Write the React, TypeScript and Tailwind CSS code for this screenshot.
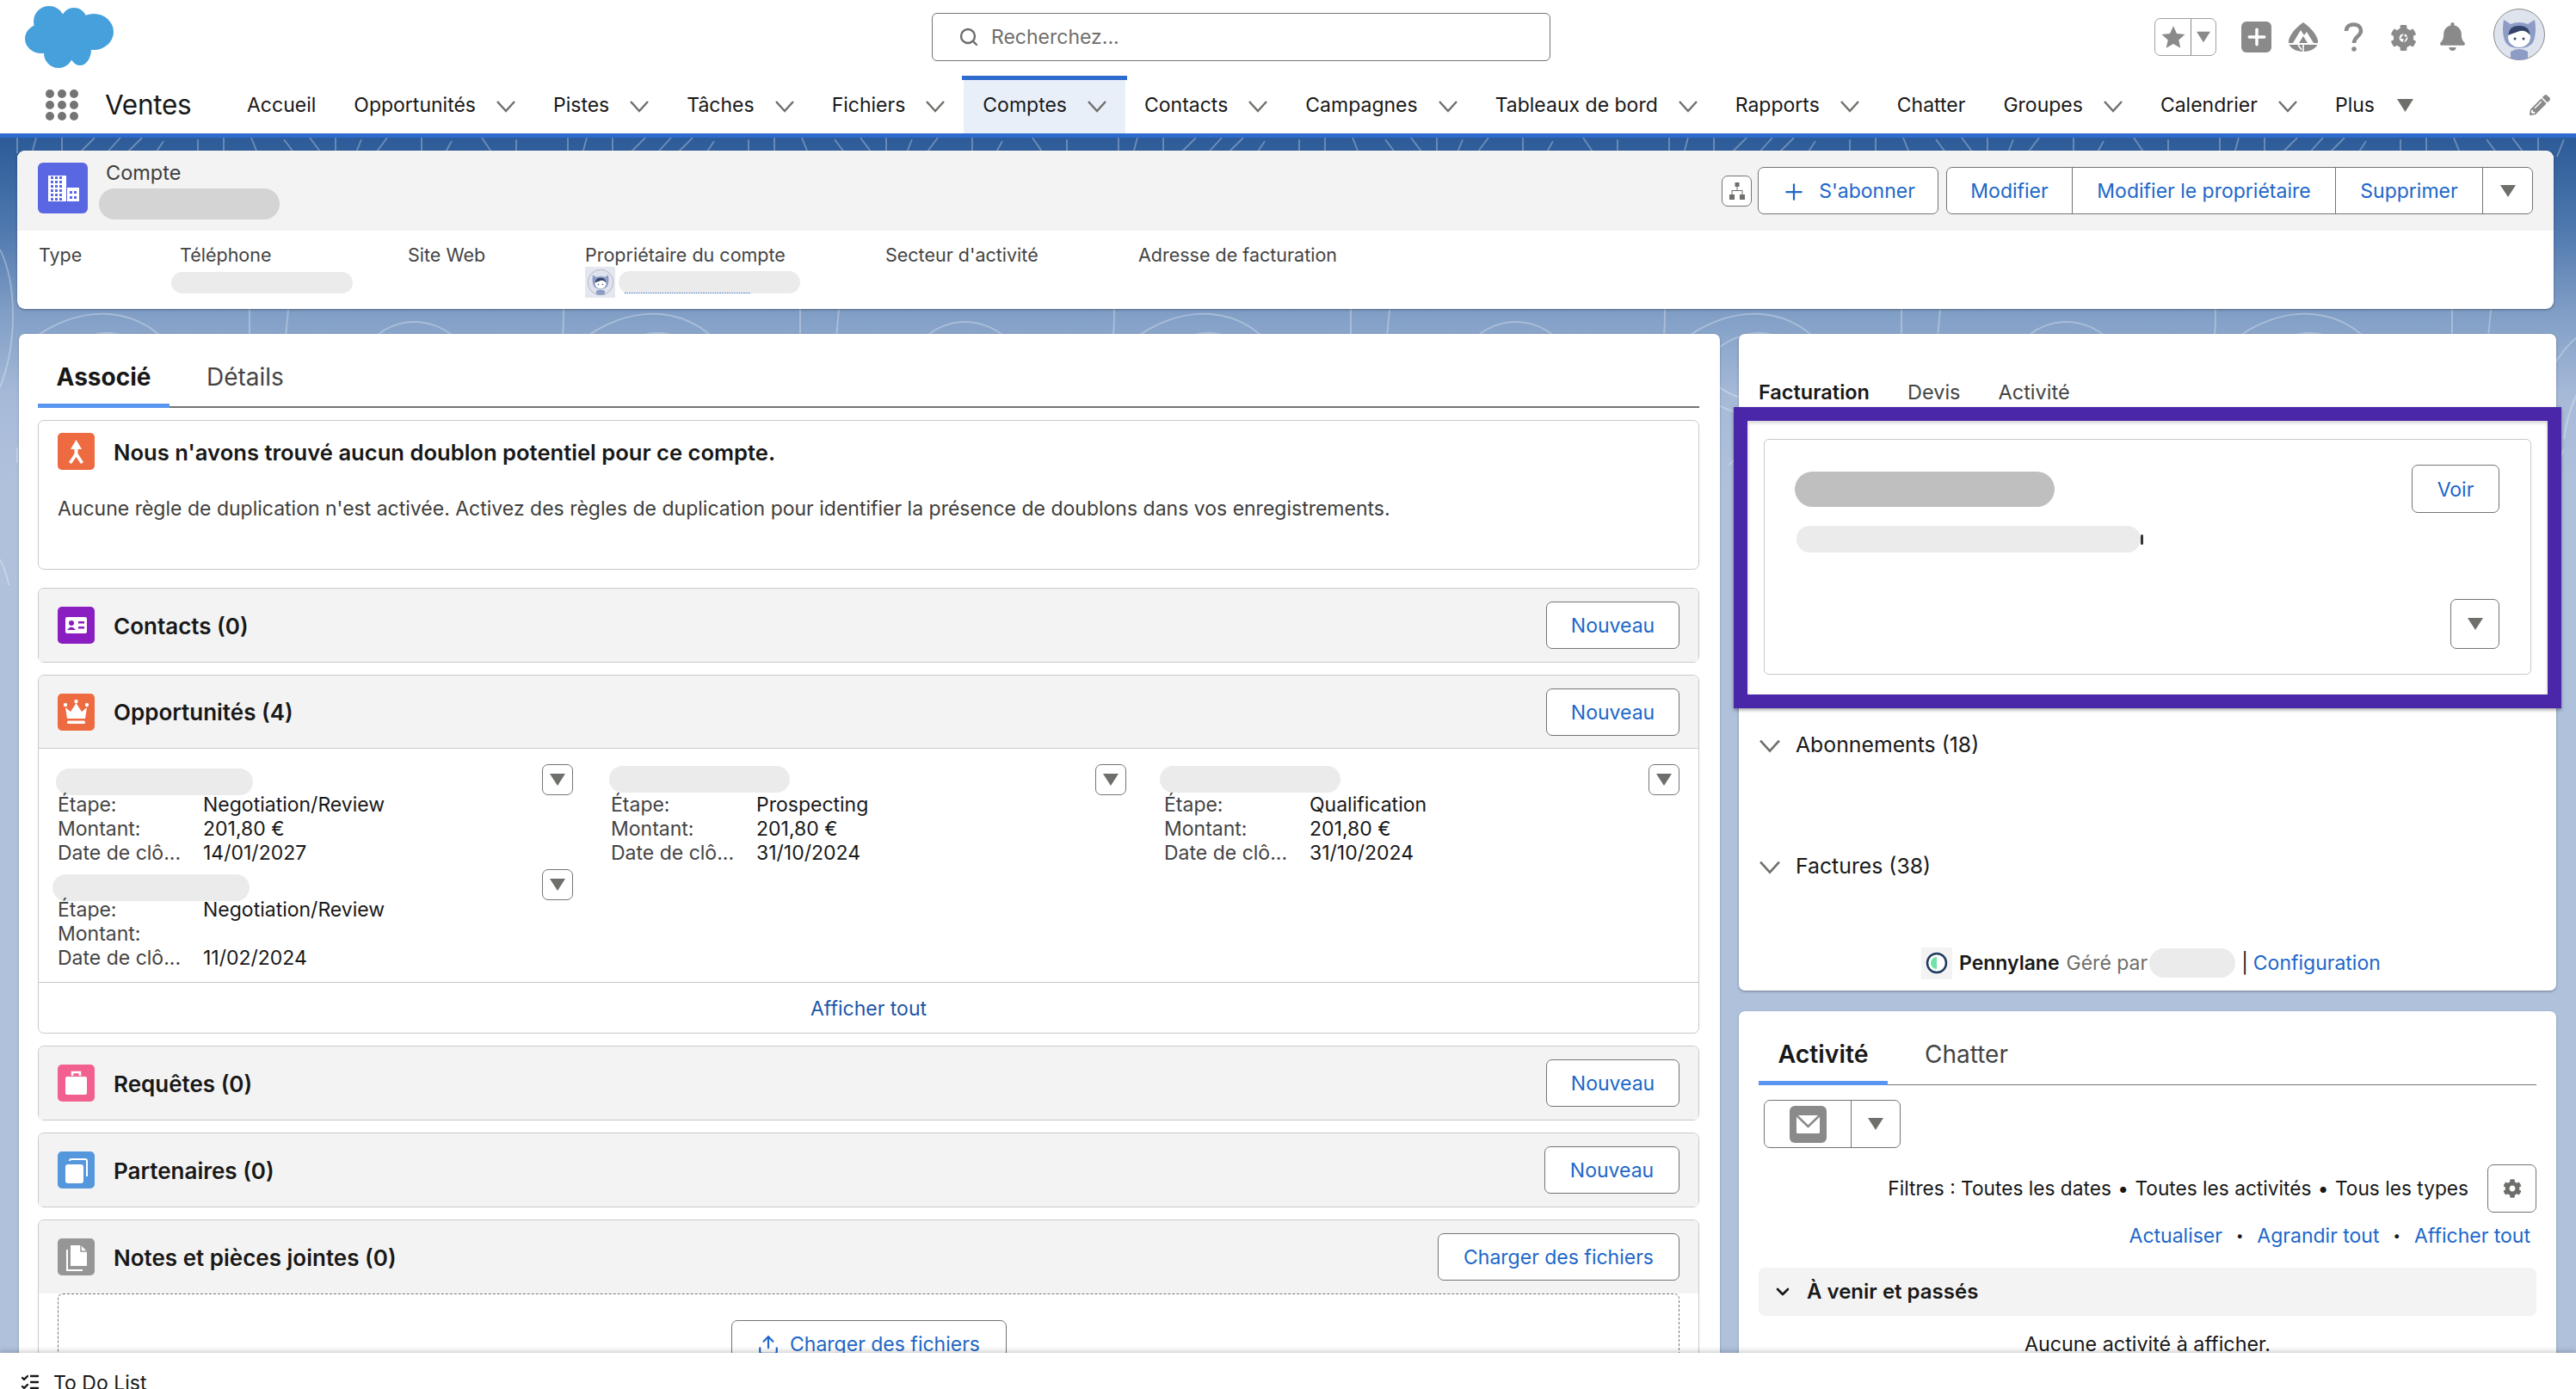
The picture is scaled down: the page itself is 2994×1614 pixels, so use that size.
import React from "react";
import { ChevronDown, Plus, Upload, ListChecks, Search } from "lucide-react";
import { FaBell, FaCog, FaPencilAlt } from "react-icons/fa";

const Caret = ({ className = "w-[18px] h-[14px]", color = "#706e6b" }: { className?: string; color?: string }) => (
  <svg viewBox="0 0 18 14" className={className}>
    <path d="M0 0H18L9 14Z" fill={color} />
  </svg>
);

const Chevron = ({ className = "w-[22px] h-[22px] text-[#706e6b]" }: { className?: string }) => (
  <svg viewBox="0 0 22 22" className={className} fill="none" stroke="currentColor" strokeWidth="2.4">
    <path d="M1 6L11 17L21 6" />
  </svg>
);

const Cloud = () => (
  <svg width="103" height="72" viewBox="0 0 103 72" fill="#45a0dc">
    <circle cx="28" cy="18" r="18" />
    <circle cx="57" cy="17" r="15" />
    <ellipse cx="80" cy="30" rx="23" ry="21" />
    <ellipse cx="19" cy="38" rx="19" ry="17" />
    <ellipse cx="39" cy="55" rx="17" ry="17" />
    <ellipse cx="64" cy="50" rx="13" ry="19" />
    <rect x="20" y="15" width="55" height="35" />
  </svg>
);

const Dots = () => (
  <svg width="38" height="36" viewBox="0 0 38 36" fill="#747474">
    {[5, 19, 33].map((x) => [5, 18, 31].map((y) => <circle key={`${x}-${y}`} cx={x} cy={y} r="5" />))}
  </svg>
);

const Avatar = ({ size = 60 }: { size?: number }) => (
  <svg width={size} height={size} viewBox="0 0 60 60">
    <circle cx="30" cy="30" r="29.5" fill="#dfe3ee" stroke="#8a8a8a" strokeWidth="1" />
    <path d="M12 13L20 18Q30 14 40 18L48 13Q50 25 48 33Q46 46 30 46Q14 46 12 33Q10 25 12 13Z" fill="#8c9cc4" />
    <ellipse cx="30" cy="33" rx="13" ry="12" fill="#fff" />
    <path d="M17 31Q19 19 30 20Q41 19 43 31Q36 23 28 27Q22 29 17 31Z" fill="#34436b" />
    <circle cx="25" cy="35" r="1.5" fill="#34436b" />
    <circle cx="35" cy="35" r="1.5" fill="#34436b" />
    <path d="M20 50Q30 44 40 50L40 58Q30 61 20 58Z" fill="#8c9cc4" />
  </svg>
);

const Tile = ({ color, children }: { color: string; children: React.ReactNode }) => (
  <svg width="43" height="43" viewBox="0 0 43 43" className="shrink-0">
    <rect width="43" height="43" rx="5" fill={color} />
    {children}
  </svg>
);

const DupIcon = () => (
  <Tile color="#ee6a40">
    <path d="M21.5 8L28 19H23.5V24L30 34L27 36L21.5 28L16 36L13 34L19.5 24V19H15Z" fill="#fff" />
  </Tile>
);
const ContactIcon = () => (
  <Tile color="#8a1ec0">
    <rect x="9" y="12" width="25" height="19" rx="2" fill="#fff" />
    <circle cx="16" cy="19" r="3" fill="#8a1ec0" />
    <path d="M11 27Q16 20 21 27Z" fill="#8a1ec0" />
    <rect x="24" y="17" width="7" height="2.5" fill="#8a1ec0" />
    <rect x="24" y="23" width="7" height="2.5" fill="#8a1ec0" />
  </Tile>
);
const CrownIcon = () => (
  <Tile color="#ee6a40">
    <path d="M9 16L15 21L21.5 11L28 21L34 16L32 29H11Z" fill="#fff" />
    <circle cx="9" cy="13" r="2.2" fill="#fff" />
    <circle cx="21.5" cy="9" r="2.2" fill="#fff" />
    <circle cx="34" cy="13" r="2.2" fill="#fff" />
    <rect x="11" y="31.5" width="21" height="3.5" rx="1.5" fill="#fff" />
  </Tile>
);
const CaseIcon = () => (
  <Tile color="#f2608f">
    <rect x="9" y="14" width="25" height="21" rx="2" fill="#fff" />
    <path d="M17 13V9H26V13" fill="none" stroke="#fff" strokeWidth="2.5" />
  </Tile>
);
const PartnerIcon = () => (
  <Tile color="#5597dc">
    <path d="M14 11Q14 9 16 9H32Q34 9 34 11V29" fill="none" stroke="#fff" strokeWidth="2" />
    <rect x="9" y="15" width="21" height="22" rx="3" fill="#fff" />
  </Tile>
);
const FileIcon = () => (
  <Tile color="#969696">
    <path d="M15 8H27L34 15V32H15Z" fill="#fff" />
    <path d="M27 8V15H34" fill="none" stroke="#969696" strokeWidth="1.5" />
    <path d="M11 13V37H29" fill="none" stroke="#fff" strokeWidth="2" />
  </Tile>
);

const Redact = ({ className }: { className: string }) => <div className={`rounded-full ${className}`} />;

const Btn = ({ children, className = "" }: { children: React.ReactNode; className?: string }) => (
  <button className={`flex items-center justify-center bg-white border border-[#747474] rounded-[7px] text-[#2067c9] text-[23px] pt-[2px] shrink-0 ${className}`}>
    {children}
  </button>
);

const CaretBtn = ({ className = "" }: { className?: string }) => (
  <button className={`flex items-center justify-center bg-white border border-[#747474] rounded-[7px] shrink-0 ${className}`}>
    <Caret />
  </button>
);

const navItems: { label: string; chevron?: boolean; active?: boolean }[] = [
  { label: "Accueil" },
  { label: "Opportunités", chevron: true },
  { label: "Pistes", chevron: true },
  { label: "Tâches", chevron: true },
  { label: "Fichiers", chevron: true },
  { label: "Comptes", chevron: true, active: true },
  { label: "Contacts", chevron: true },
  { label: "Campagnes", chevron: true },
  { label: "Tableaux de bord", chevron: true },
  { label: "Rapports", chevron: true },
  { label: "Chatter" },
  { label: "Groupes", chevron: true },
  { label: "Calendrier", chevron: true },
];

const Header = () => (
  <header className="h-[155px] shrink-0 bg-white flex flex-col">
    <div className="h-[88px] shrink-0 flex items-start">
      <div className="ml-[29px] mt-[7px] w-[1054px] shrink-0">
        <Cloud />
      </div>
      <div className="mt-[15px] w-[719px] h-[56px] shrink-0 border border-[#747474] rounded-[6px] flex items-center pl-[30px] gap-[14px]">
        <Search className="w-[24px] h-[24px] text-[#706e6b]" strokeWidth={2.4} />
        <span className="text-[23px] pt-[1px] text-[#706e6b]">Recherchez...</span>
      </div>
      <div className="ml-[702px] mt-[21px] w-[72px] h-[44px] shrink-0 border border-[#a0a0a0] rounded-[7px] flex">
        <div className="w-[42px] border-r border-[#8a8a8a] flex items-center justify-center">
          <svg width="28" height="28" viewBox="0 0 24 24" fill="#8a8a8a">
            <path d="M12 1L15.4 8.6L23.5 9.4L17.4 14.9L19.1 23L12 18.8L4.9 23L6.6 14.9L0.5 9.4L8.6 8.6Z" />
          </svg>
        </div>
        <div className="flex-1 flex items-center justify-center">
          <Caret className="w-[16px] h-[14px]" color="#8a8a8a" />
        </div>
      </div>
      <div className="ml-[29px] mt-[25px] w-[35px] h-[36px] shrink-0 bg-[#8a8a8a] rounded-[6px] flex items-center justify-center">
        <Plus className="w-[30px] h-[30px] text-white" strokeWidth={2.8} />
      </div>
      <div className="ml-[19px] mt-[26px] shrink-0">
        <svg width="36" height="34" viewBox="0 0 36 34">
          <path d="M18 0C28 7 36 17 35 24C34 30 26 34 18 34C10 34 2 30 1 24C0 17 8 7 18 0Z" fill="#8a8a8a" />
          <path d="M6 24L15 9L19 15L22 11L30 24Z" fill="#fff" />
          <path d="M13 24L18 16L23 24Z" fill="#8a8a8a" />
          <path d="M1 25H35" stroke="#fff" strokeWidth="2" />
          <path d="M18 26V34M12 26L16 32" stroke="#fff" strokeWidth="1.6" />
        </svg>
      </div>
      <div className="ml-[29px] mt-[26px] shrink-0">
        <svg width="23" height="34" viewBox="0 0 23 34" fill="none" stroke="#8a8a8a" strokeWidth="4.5">
          <path d="M3 10C3 5 7 2.5 11.5 2.5C17 2.5 20 6 20 10C20 16 12 16.5 12 24" />
          <circle cx="12" cy="31" r="2.8" fill="#8a8a8a" stroke="none" />
        </svg>
      </div>
      <div className="ml-[31px] mt-[28px] shrink-0 relative">
        <FaCog className="w-[31px] h-[32px] text-[#8a8a8a]" />
        <svg width="10" height="14" viewBox="0 0 10 14" className="absolute left-[11px] top-[9px]" fill="#8a8a8a">
          <path d="M6 0L1 8H4.5L3.5 14L9 5.5H5.5Z" />
        </svg>
      </div>
      <div className="ml-[24px] mt-[26px] shrink-0">
        <FaBell className="w-[35px] h-[33px] text-[#8a8a8a]" />
      </div>
      <div className="ml-[30px] mt-[10px] shrink-0">
        <Avatar />
      </div>
    </div>
    <nav className="flex-1 flex items-stretch">
      <div className="ml-[53px] w-[69px] shrink-0 flex items-center">
        <Dots />
      </div>
      <div className="w-[143px] shrink-0 flex items-center text-[31.5px] tracking-[-0.3px] text-[#181818]">Ventes</div>
      {navItems.map((n) => (
        <div
          key={n.label}
          className={`flex items-center pl-[22px] pr-[22px] pt-[2px] gap-[24px] text-[23px] text-[#181818] shrink-0 ${
            n.active ? "bg-[#e8eff9] relative" : ""
          }`}
        >
          {n.active && <div className="absolute -left-[2px] -right-[2px] top-0 h-[5px] bg-[#2e6bce]" />}
          <span>{n.label}</span>
          {n.chevron && <Chevron />}
        </div>
      ))}
      <div className="flex items-center pl-[22px] pt-[2px] gap-[26px] text-[23px] text-[#181818] shrink-0">
        <span>Plus</span>
        <Caret className="w-[19px] h-[15px]" />
      </div>
      <div className="flex-1 flex items-center justify-end pr-[30px]">
        <FaPencilAlt className="w-[24px] h-[24px] text-[#8a8a8a]" />
      </div>
    </nav>
  </header>
);

const Field = ({ label, className, children }: { label: string; className: string; children?: React.ReactNode }) => (
  <div className={`shrink-0 flex flex-col ${className}`}>
    <span className="text-[21.5px] leading-[28px] text-[#444444] whitespace-nowrap">{label}</span>
    {children}
  </div>
);

const Highlights = () => (
  <section className="relative ml-[20px] mr-[26px] mt-[15px] h-[184px] bg-white rounded-[9px] shadow-[0_1px_3px_rgba(0,0,0,0.35)] overflow-hidden shrink-0">
    <div className="h-[93px] bg-[#f3f3f3] flex items-start pl-[24px]">
      <svg width="58" height="59" viewBox="0 0 58 59" className="mt-[14px] shrink-0">
        <rect width="58" height="59" rx="6" fill="#5a67e3" />
        <rect x="12" y="15" width="21" height="30" fill="#fff" />
        <rect x="34" y="29" width="14" height="16" fill="#fff" />
        {[16, 21, 26, 31, 36, 41].map((y) =>
          [15, 20, 25].map((x) => <rect key={`${x}-${y}`} x={x} y={y} width="3" height="3" fill="#5a67e3" />)
        )}
        {[33, 39].map((y) =>
          [37, 42].map((x) => <rect key={`${x}-${y}`} x={x} y={y} width="3" height="3" fill="#5a67e3" />)
        )}
      </svg>
      <div className="ml-[13px] mt-[12px] flex flex-col">
        <span className="ml-[8px] text-[23.5px] leading-[28px] text-[#3e3e3c]">Compte</span>
        <Redact className="w-[210px] h-[36px] bg-[#d4d4d4] mt-[4px]" />
      </div>
      <div className="ml-auto mt-[19px] flex items-start">
        <button className="mt-[10px] w-[35px] h-[36px] bg-white border border-[#747474] rounded-[7px] flex items-center justify-center">
          <svg width="18" height="20" viewBox="0 0 18 20" fill="#706e6b">
            <rect x="6.5" y="0" width="5" height="5" />
            <rect x="0" y="14" width="6" height="6" />
            <rect x="12" y="14" width="6" height="6" />
            <path d="M8.5 5V9H2.5V14H3.5V10H14.5V14H15.5V9H9.5V5Z" />
          </svg>
        </button>
        <Btn className="ml-[7px] w-[210px] h-[55px] gap-[14px]">
          <Plus className="w-[30px] h-[30px]" strokeWidth={1.8} />
          <span>S'abonner</span>
        </Btn>
        <div className="ml-[9px] mr-[24px] h-[55px] flex bg-white border border-[#747474] rounded-[7px] text-[#2067c9] text-[23px]">
          <div className="w-[146px] pt-[2px] flex items-center justify-center border-r border-[#747474]">Modifier</div>
          <div className="w-[306px] pt-[2px] flex items-center justify-center border-r border-[#747474]">Modifier le propriétaire</div>
          <div className="w-[171px] pt-[2px] flex items-center justify-center border-r border-[#747474]">Supprimer</div>
          <div className="w-[57px] flex items-center justify-center">
            <Caret />
          </div>
        </div>
      </div>
    </div>
    <div className="flex pl-[25px] pt-[14px]">
      <Field label="Type" className="w-[164px]" />
      <Field label="Téléphone" className="w-[265px]">
        <Redact className="w-[211px] h-[25px] bg-[#ebebeb] -ml-[10px] mt-[6px]" />
      </Field>
      <Field label="Site Web" className="w-[206px]" />
      <Field label="Propriétaire du compte" className="w-[349px]">
        <div className="flex items-start">
          <div className="w-[35px] h-[36px] bg-[#e4e7f0] flex items-center justify-center">
            <Avatar size={30} />
          </div>
          <div className="relative ml-[4px] mt-[5px] w-[211px] h-[26px] bg-[#ebebeb] rounded-full">
            <div className="absolute left-[7px] bottom-0 w-[146px] border-b border-dotted border-[#2e6bce]" />
          </div>
        </div>
      </Field>
      <Field label="Secteur d'activité" className="w-[294px]" />
      <Field label="Adresse de facturation" className="w-[300px]" />
    </div>
  </section>
);

const CardShell = ({
  title,
  icon,
  button,
  btnClass,
  children,
}: {
  title: string;
  icon: React.ReactNode;
  button?: string;
  btnClass?: string;
  children?: React.ReactNode;
}) => (
  <div className="border border-[#c9c9c9] rounded-[7px] shrink-0 bg-white">
    <div className="h-[85px] bg-[#f3f3f3] rounded-t-[7px] flex items-center pl-[22px] pr-[22px]">
      {icon}
      <span className="ml-[22px] pt-[1px] text-[26px] font-semibold text-[#181818]">{title}</span>
      {button && <Btn className={`ml-auto h-[55px] ${btnClass}`}>{button}</Btn>}
    </div>
    {children}
  </div>
);

const Row = ({ k, v }: { k: string; v?: string }) => (
  <div className="flex h-[28px] pt-[2px] items-center text-[23px]">
    <span className="w-[169px] shrink-0 text-[#444444]">{k}</span>
    <span className="text-[#181818]">{v}</span>
  </div>
);

const Opp = ({
  stage,
  amount,
  date,
  pillClass = "w-[210px] -ml-[2px] mt-[2px]",
}: {
  stage: string;
  amount?: string;
  date: string;
  pillClass?: string;
}) => (
  <div className="w-[599px]">
    <div className="h-[32px] flex items-start justify-between">
      <Redact className={`h-[31px] bg-[#ebebeb] ${pillClass}`} />
      <CaretBtn className="w-[36px] h-[36px] relative" />
    </div>
    <Row k="Étape:" v={stage} />
    <Row k="Montant:" v={amount} />
    <Row k="Date de clô..." v={date} />
  </div>
);

const LeftCard = () => (
  <section className="w-[1977px] shrink-0 bg-white rounded-t-[7px] pl-[22px] pr-[24px] h-[1300px] shadow-[0_1px_3px_rgba(0,0,0,0.25)]">
    <div className="h-[86px] flex items-end border-b-2 border-[#747474]">
      <div className="relative w-[153px] h-[69px] flex items-center justify-center">
        <span className="text-[28px] font-bold text-[#181818]">Associé</span>
        <div className="absolute left-0 right-0 -bottom-[2px] h-[5px] bg-[#5a95f0]" />
      </div>
      <div className="h-[69px] ml-[43px] flex items-center text-[28px] text-[#444444]">Détails</div>
    </div>
    <div className="mt-[14px] h-[174px] border border-[#c9c9c9] rounded-[7px] px-[22px] pt-[14px]">
      <div className="flex items-start">
        <DupIcon />
        <span className="ml-[22px] mt-[4px] text-[25.6px] font-semibold text-[#181818]">
          Nous n'avons trouvé aucun doublon potentiel pour ce compte.
        </span>
      </div>
      <p className="mt-[30px] text-[23px] leading-[30px] text-[#3e3e3c]">
        Aucune règle de duplication n'est activée. Activez des règles de duplication pour identifier la présence de doublons dans vos enregistrements.
      </p>
    </div>
    <div className="flex flex-col gap-[14px] mt-[21px]">
      <CardShell title="Contacts (0)" icon={<ContactIcon />} button="Nouveau" btnClass="w-[155px]" />
      <div className="border border-[#c9c9c9] rounded-[7px] shrink-0 bg-white">
        <div className="h-[85px] bg-[#f3f3f3] rounded-t-[7px] flex items-center px-[22px] border-b border-[#c9c9c9]">
          <CrownIcon />
          <span className="ml-[22px] pt-[1px] text-[26px] font-semibold text-[#181818]">Opportunités (4)</span>
          <Btn className="ml-auto w-[155px] h-[55px]">Nouveau</Btn>
        </div>
        <div className="h-[272px] pl-[22px] pt-[18px] flex gap-[44px] border-b border-[#c9c9c9]">
          <div className="flex flex-col gap-[6px]">
            <Opp stage="Negotiation/Review" amount="201,80 €" date="14/01/2027" pillClass="w-[229px] -ml-[2px] mt-[5px]" />
            <Opp stage="Negotiation/Review" date="11/02/2024" pillClass="w-[229px] -ml-[6px] mt-[6px]" />
          </div>
          <Opp stage="Prospecting" amount="201,80 €" date="31/10/2024" />
          <Opp stage="Qualification" amount="201,80 €" date="31/10/2024" pillClass="w-[210px] -ml-[5px] mt-[2px]" />
        </div>
        <div className="h-[58px] pt-[2px] flex items-center justify-center text-[23px] text-[#1e56a8]">Afficher tout</div>
      </div>
      <CardShell title="Requêtes (0)" icon={<CaseIcon />} button="Nouveau" btnClass="w-[155px]" />
      <CardShell title="Partenaires (0)" icon={<PartnerIcon />} button="Nouveau" btnClass="w-[157px]" />
      <CardShell title="Notes et pièces jointes (0)" icon={<FileIcon />} button="Charger des fichiers" btnClass="w-[281px]">
        <div className="mx-[22px] h-[200px] border border-dashed border-[#747474] rounded-[6px] pt-[30px] flex justify-center">
          <Btn className="w-[320px] h-[55px] gap-[12px]">
            <Upload className="w-[26px] h-[26px]" strokeWidth={2} />
            <span>Charger des fichiers</span>
          </Btn>
        </div>
      </CardShell>
    </div>
  </section>
);

const BillingCard = () => (
  <section className="h-[763px] bg-white rounded-[7px] shadow-[0_1px_3px_rgba(0,0,0,0.35)] flex flex-col shrink-0">
    <div className="h-[85px] shrink-0 flex items-end pl-[23px] gap-[44px] pb-[3px] text-[23.5px]">
      <span className="font-semibold text-[#181818] h-[32px]">Facturation</span>
      <span className="text-[#444444] h-[32px]">Devis</span>
      <span className="text-[#444444] h-[32px]">Activité</span>
    </div>
    <div className="relative h-[350px] shrink-0 px-[29px] pt-[37px]">
      <div className="h-[274px] border border-[#c9c9c9] rounded-[6px] flex justify-between pl-[35px] pr-[36px] pt-[29px]">
        <div className="flex flex-col">
          <Redact className="w-[302px] h-[41px] bg-[#bfbfbf] mt-[8px]" />
          <div className="flex items-center mt-[22px] ml-[2px]">
            <Redact className="w-[400px] h-[31px] bg-[#ebebeb]" />
            <div className="w-[3px] h-[12px] bg-[#333333] rounded-full" />
          </div>
        </div>
        <div className="flex flex-col items-end">
          <Btn className="w-[102px] h-[56px]">Voir</Btn>
          <CaretBtn className="w-[57px] h-[58px] mt-[100px]" />
        </div>
      </div>
      <div className="absolute -left-[6px] -right-[6px] top-0 bottom-0 border-[16px] border-[#4a27a8] pointer-events-none shadow-[0_2px_4px_rgba(0,0,0,0.35),inset_0_2px_4px_rgba(0,0,0,0.2)]" />
    </div>
    <div className="flex flex-col pl-[24px] text-[24.8px] text-[#181818] mt-[25px] gap-[105px]">
      <div className="flex items-center h-[36px] gap-[18px]">
        <Chevron className="w-[24px] h-[24px] text-[#706e6b]" />
        <span>Abonnements (18)</span>
      </div>
      <div className="flex items-center h-[36px] gap-[18px]">
        <Chevron className="w-[24px] h-[24px] text-[#706e6b]" />
        <span>Factures (38)</span>
      </div>
    </div>
    <div className="flex items-center mt-[75px] ml-[212px] text-[23px] h-[38px]">
      <div className="w-[36px] h-[37px] bg-[#f3f3f3] flex items-center justify-center shrink-0">
        <svg width="26" height="26" viewBox="0 0 26 26">
          <circle cx="13" cy="13" r="11" fill="#fff" stroke="#1e3a5f" strokeWidth="2.5" />
          <path d="M13 6A7 7 0 0 0 13 20Z" fill="#6fe3a8" />
        </svg>
      </div>
      <span className="ml-[8px] font-semibold text-[#181818]">Pennylane</span>
      <span className="ml-[8px] text-[#706e6b]">Géré par</span>
      <Redact className="ml-[2px] w-[100px] h-[34px] bg-[#ebebeb]" />
      <span className="ml-[7px] text-[#181818]">|</span>
      <span className="ml-[6px] text-[#2067c9]">Configuration</span>
    </div>
  </section>
);

const ActivityCard = () => (
  <section className="mt-[24px] bg-white rounded-t-[7px] px-[23px] h-[500px] shrink-0 shadow-[0_1px_3px_rgba(0,0,0,0.25)]">
    <div className="h-[86px] flex items-end border-b border-[#747474]">
      <div className="relative w-[150px] h-[70px] flex items-center justify-center">
        <span className="text-[28.5px] font-semibold text-[#181818]">Activité</span>
        <div className="absolute left-0 right-0 -bottom-[1px] h-[5px] bg-[#5a95f0]" />
      </div>
      <div className="h-[70px] ml-[43px] flex items-center text-[28px] text-[#444444]">Chatter</div>
    </div>
    <div className="mt-[17px] ml-[6px] w-[159px] h-[56px] border border-[#747474] rounded-[7px] flex">
      <div className="w-[101px] border-r border-[#747474] flex items-center justify-center">
        <svg width="43" height="43" viewBox="0 0 43 43">
          <rect width="43" height="43" rx="6" fill="#8a8a8a" />
          <rect x="8" y="11" width="27" height="21" rx="1.5" fill="#fff" />
          <path d="M8 11L21.5 24L35 11" fill="none" stroke="#8a8a8a" strokeWidth="2.5" />
        </svg>
      </div>
      <div className="flex-1 flex items-center justify-center">
        <Caret />
      </div>
    </div>
    <div className="mt-[19px] flex items-center justify-end h-[56px]">
      <span className="text-[22.7px] text-[#181818] whitespace-nowrap">
        Filtres : Toutes les dates <span className="mx-[1px]">•</span> Toutes les activités <span className="mx-[1px]">•</span> Tous les types
      </span>
      <button className="ml-[22px] w-[57px] h-[56px] border border-[#747474] rounded-[7px] flex items-center justify-center shrink-0">
        <FaCog className="w-[22px] h-[22px] text-[#706e6b]" />
      </button>
    </div>
    <div className="mt-[12px] flex justify-end items-center gap-[16px] pr-[7px] text-[23px] text-[#2067c9] h-[30px]">
      <span>Actualiser</span>
      <span className="text-[#181818] text-[15px]">•</span>
      <span>Agrandir tout</span>
      <span className="text-[#181818] text-[15px]">•</span>
      <span>Afficher tout</span>
    </div>
    <div className="mt-[22px] h-[56px] bg-[#f3f3f3] rounded-[7px] flex items-center pl-[16px]">
      <ChevronDown className="w-[24px] h-[24px] text-[#181818]" strokeWidth={2.6} />
      <span className="ml-[16px] text-[24px] font-semibold text-[#181818]">À venir et passés</span>
    </div>
    <div className="mt-[16px] text-center text-[23.3px] text-[#181818]">Aucune activité à afficher.</div>
  </section>
);

const Contours = () => (
  <svg className="absolute inset-0 w-full h-[520px] pointer-events-none" preserveAspectRatio="none">
    <defs>
      <pattern id="ct" width="640" height="360" patternUnits="userSpaceOnUse">
        <g fill="none" stroke="#fff" strokeOpacity="0.3" strokeWidth="1.8">
          <path d="M20 0V18M42 0L36 22M72 0V16M110 0L90 20M140 0L120 22M165 0L145 20M190 4L178 22M230 2V22M260 0V20M292 0L300 20M330 2L345 22M360 0L375 20M390 0V20M420 2L412 22M450 0L435 20M490 0V22M525 4L515 22M560 0L575 22M600 2V20" />
          <path d="M30 240C90 190 170 190 210 260C240 300 200 340 140 330C80 320 20 290 30 240Z" />
          <path d="M70 250C110 215 160 220 180 265C195 295 165 315 125 308C85 300 50 280 70 250Z" />
          <path d="M290 195V360M335 200L320 360" />
          <path d="M380 350C395 250 450 195 510 220C560 245 590 300 600 350" />
          <path d="M420 350C430 280 470 240 510 260C545 280 560 315 565 350" />
          <path d="M0 130C20 170 20 240 0 290M620 120C650 170 650 240 620 300" />
        </g>
      </pattern>
    </defs>
    <rect width="100%" height="100%" fill="url(#ct)" />
  </svg>
);

export default function App() {
  return (
    <div className="relative w-[2994px] h-[1614px] overflow-hidden flex flex-col [font-family:Inter,sans-serif] bg-white">
      <Header />
      <main className="relative h-[1417px] shrink-0 border-t-[5px] border-[#2e6bce] overflow-hidden flex flex-col bg-[linear-gradient(180deg,#2c5b98_0px,#4c76ad_100px,#7f9dc5_200px,#a6bad8_300px,#b0c1dc_400px)]">
        <Contours />
        <div className="relative flex flex-col">
          <Highlights />
          <div className="flex mt-[29px] ml-[22px] gap-[22px]">
            <LeftCard />
            <div className="w-[950px] shrink-0 flex flex-col">
              <BillingCard />
              <ActivityCard />
            </div>
          </div>
        </div>
      </main>
      <footer className="relative h-[42px] shrink-0 bg-white shadow-[0_-2px_6px_rgba(0,0,0,0.2)] flex items-start pl-[23px] pt-[21px] overflow-hidden">
        <ListChecks className="w-[24px] h-[24px] text-[#181818] mt-[1px]" strokeWidth={2.4} />
        <span className="ml-[15px] text-[23px] leading-[28px] text-[#181818]">To Do List</span>
      </footer>
    </div>
  );
}
